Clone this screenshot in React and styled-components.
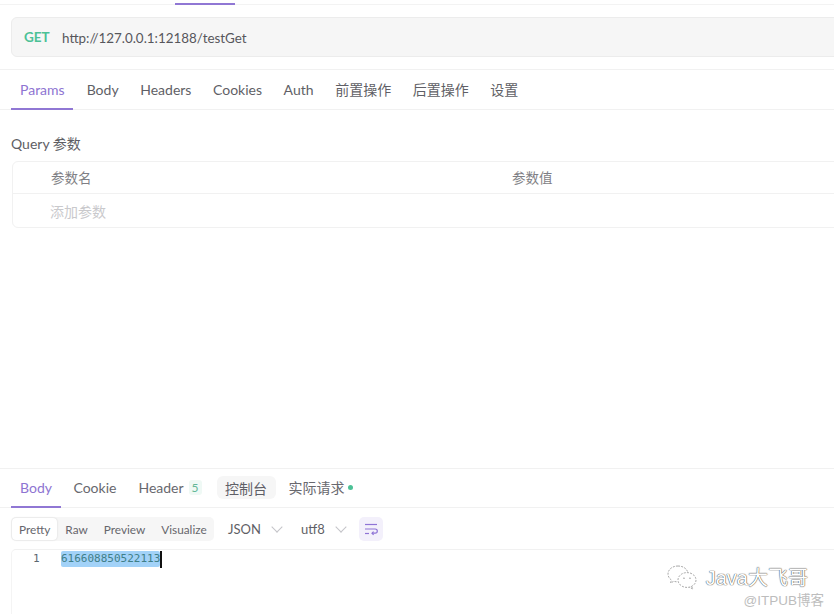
import React from 'react';
import styled, { createGlobalStyle } from 'styled-components';

const UI_FONT = '"Lato", "Noto Sans CJK SC", sans-serif';

const GlobalStyle = createGlobalStyle`
  html, body {
    margin: 0;
    padding: 0;
    background: #fff;
    overflow: hidden;
  }
  body {
    font-family: ${UI_FONT};
    color: #55555c;
  }
`;

const App = () => {
  return (
    <Page>
      <GlobalStyle />
      <TopStrip>
        <TopIndicator />
      </TopStrip>
      <UrlBar>
        <Method>GET</Method>
        <Url>http://127.0.0.1:12188/testGet</Url>
      </UrlBar>
      <RequestTabs>
        <Tab $active $gap={14}>Params</Tab>
        <Tab $gap={21.6}>Body</Tab>
        <Tab $gap={21.6}>Headers</Tab>
        <Tab $gap={21.6}>Cookies</Tab>
        <Tab $gap={21.6}>Auth</Tab>
        <Tab $gap={21.6}>前置操作</Tab>
        <Tab $gap={21.6}>后置操作</Tab>
        <Tab $gap={21.6}>设置</Tab>
      </RequestTabs>
      <RequestPanel>
        <SectionTitle>Query 参数</SectionTitle>
        <ParamTable>
          <ParamHead>
            <NameCell>参数名</NameCell>
            <ValueCell>参数值</ValueCell>
          </ParamHead>
          <ParamRow>
            <Placeholder>添加参数</Placeholder>
          </ParamRow>
        </ParamTable>
      </RequestPanel>
      <ResponseTabs>
        <ResTab $active $gap={12.5}>Body</ResTab>
        <ResTab $gap={22}>Cookie</ResTab>
        <ResTab $gap={15}>Header<Count>5</Count></ResTab>
        <ConsoleTab>控制台</ConsoleTab>
        <ResTab $gap={0}>实际请求<Dot /></ResTab>
      </ResponseTabs>
      <Toolbar>
        <ModeGroup>
          <ModeOn>Pretty</ModeOn>
          <Mode>Raw</Mode>
          <Mode>Preview</Mode>
          <Mode>Visualize</Mode>
        </ModeGroup>
        <Select $width={73}>
          JSON
          <Chevron />
        </Select>
        <Select $width={58}>
          utf8
          <Chevron />
        </Select>
        <WrapButton>
          <svg width="14" height="14" viewBox="0 0 14 14" fill="none" stroke="#8f74d6" strokeWidth="1.2">
            <path d="M1 2.5h12" />
            <path d="M1 7h10.2a1.9 1.9 0 0 1 0 4.2H8" />
            <path d="M9.6 9.6 8 11.2l1.6 1.6" />
            <path d="M1 11.5h4" />
          </svg>
        </WrapButton>
      </Toolbar>
      <CodeArea>
        <LineNo>1</LineNo>
        <Selected>616608850522113</Selected>
        <Caret />
      </CodeArea>
      <Watermark>
        <WechatRow>
          <svg width="32" height="26" viewBox="0 0 32 26" fill="none" stroke="#a9a9a9" strokeWidth="1" strokeDasharray="2 1.2">
            <path d="M12 2C6 2 2 5.700 2 10c0 2.500 1.300 4.500 3.400 6l-.8 3 3.200-1.700c1 .3 2 .5 3.200.5" />
            <path d="M12 2c4.800 0 8.700 2.500 9.700 6" />
            <ellipse cx="21" cy="16" rx="9" ry="7.400" />
            <path d="m25.500 22.500 1.500 2.500-3.700-1.600" />
            <circle cx="18" cy="14" r=".6" />
            <circle cx="24" cy="14" r=".6" />
          </svg>
          <WechatName>Java大飞哥</WechatName>
        </WechatRow>
        <Credit>@ITPUB博客</Credit>
      </Watermark>
    </Page>
  );
};

export default App;

const Page = styled.div`
  position: relative;
  width: 834px;
  height: 614px;
  overflow: hidden;
  background: #fff;
`;

const TopStrip = styled.div`
  position: relative;
  height: 4px;
  border-bottom: 1px solid #f3f3f3;
`;

const TopIndicator = styled.div`
  position: absolute;
  left: 175px;
  top: 3px;
  width: 60px;
  height: 2px;
  background: #9077d4;
`;

const UrlBar = styled.div`
  display: flex;
  align-items: center;
  height: 38px;
  margin: 12px -10px 0 11px;
  padding: 1px 0 0 12px;
  box-sizing: content-box;
  height: 37px;
  background: #f6f6f6;
  border: 1px solid #ececec;
  border-radius: 6px;
`;

const Method = styled.span`
  width: 38px;
  font-size: 13.500px;
  font-weight: 700;
  color: #4cc196;
  position: relative;
  top: -1px;
`;

const Url = styled.span`
  font-size: 13.400px;
  color: #56565c;
`;

const RequestTabs = styled.div`
  display: flex;
  height: 39px;
  margin-top: 12px;
  padding-left: 11px;
  border-top: 1px solid #f1f1f1;
  border-bottom: 1px solid #f1f1f1;
`;

const Tab = styled.div`
  display: flex;
  align-items: center;
  box-sizing: border-box;
  height: 40px;
  margin-right: ${(p) => p.$gap}px;
  padding: ${(p) => (p.$active ? '0 8px 0 9px' : '0')};
  font-size: 14px;
  color: ${(p) => (p.$active ? '#8e74d2' : '#5f5f66')};
  border-bottom: 2px solid ${(p) => (p.$active ? '#9077d4' : 'transparent')};
`;

const RequestPanel = styled.div`
  height: 358px;
  padding-left: 11px;
  box-sizing: border-box;
`;

const SectionTitle = styled.div`
  height: 20px;
  padding-top: 24px;
  font-size: 14px;
  line-height: 20px;
  color: #5e5e64;
`;

const ParamTable = styled.div`
  margin: 7px -10px 0 1px;
  border: 1px solid #f1f1f1;
  border-radius: 6px;
`;

const ParamHead = styled.div`
  display: flex;
  align-items: center;
  box-sizing: border-box;
  height: 32px;
  padding-bottom: 1px;
  border-bottom: 1px solid #f1f1f1;
  font-size: 13.500px;
  color: #7f7f85;
`;

const NameCell = styled.div`
  width: 499px;
  padding-left: 38px;
  box-sizing: border-box;
`;

const ValueCell = styled.div`
  flex: 1;
`;

const ParamRow = styled.div`
  display: flex;
  align-items: center;
  box-sizing: border-box;
  height: 33px;
  padding-left: 37px;
`;

const Placeholder = styled.span`
  font-size: 14px;
  color: #c9c9cc;
`;

const ResponseTabs = styled.div`
  display: flex;
  align-items: center;
  height: 38px;
  padding-left: 11px;
  border-top: 1px solid #f1f1f1;
  border-bottom: 1px solid #f1f1f1;
`;

const ResTab = styled.div`
  display: flex;
  align-items: center;
  box-sizing: border-box;
  height: 39px;
  margin-right: ${(p) => p.$gap}px;
  padding: ${(p) => (p.$active ? '0 9px' : '0')};
  font-size: 14px;
  color: ${(p) => (p.$active ? '#8e74d2' : '#68686e')};
  border-bottom: 2px solid ${(p) => (p.$active ? '#9077d4' : 'transparent')};
`;

const Count = styled.span`
  display: inline-block;
  margin-left: 5px;
  padding: 0 3px;
  font-size: 12px;
  color: #63b797;
  background: #eff9f5;
  border-radius: 3px;
`;

const ConsoleTab = styled.div`
  display: flex;
  align-items: center;
  height: 23px;
  margin: -1px 13px 0 0;
  padding: 0 8.500px;
  border-radius: 6px;
  background: #f6f6f6;
  font-size: 14px;
  color: #5f5f66;
`;

const Dot = styled.span`
  width: 5px;
  height: 5px;
  margin-left: 3px;
  border-radius: 50%;
  background: #4cc196;
`;

const Toolbar = styled.div`
  display: flex;
  align-items: center;
  box-sizing: border-box;
  height: 41px;
  padding: 1px 0 0 11px;
`;

const ModeGroup = styled.div`
  display: flex;
  align-items: center;
  width: 203px;
  height: 24px;
  margin-right: 14px;
  border-radius: 5px;
  background: #f6f6f6;
`;

const Mode = styled.div`
  padding: 0 8px;
  font-size: 11.800px;
  color: #66666c;
`;

const ModeOn = styled(Mode)`
  display: flex;
  align-items: center;
  height: 22px;
  margin-left: 1px;
  padding: 0 7px;
  background: #fff;
  border-radius: 4px;
  box-shadow: 0 0 2px rgba(0, 0, 0, 0.16);
`;

const Select = styled.div`
  display: flex;
  align-items: center;
  width: ${(p) => p.$width}px;
  height: 24px;
  font-size: 13px;
  color: #5f5f66;
`;

const Chevron = styled.span`
  width: 7px;
  height: 7px;
  margin: -4px 0 0 12px;
  border-right: 1px solid #c4c4c8;
  border-bottom: 1px solid #c4c4c8;
  transform: rotate(45deg);
`;

const WrapButton = styled.div`
  display: flex;
  align-items: center;
  justify-content: center;
  width: 24px;
  height: 24px;
  border-radius: 5px;
  background: #f3f0fb;
`;

const CodeArea = styled.div`
  display: flex;
  align-items: flex-start;
  height: 65px;
  padding-top: 1px;
  border-top: 1px solid #f1f1f1;
  margin-left: 11px;
  border-left: 1px solid #f4f4f4;
  border-top-left-radius: 5px;
  font-family: "DejaVu Sans Mono", monospace;
  font-size: 11px;
`;

const LineNo = styled.span`
  width: 49px;
  padding-left: 21px;
  box-sizing: border-box;
  line-height: 16px;
  color: #5b6770;
`;

const Selected = styled.span`
  height: 16px;
  line-height: 16px;
  background: #a2d2f8;
  color: #3f7f88;
  border-radius: 2px;
`;

const Caret = styled.span`
  width: 2px;
  height: 17px;
  background: #111;
`;

const Watermark = styled.div`
  position: absolute;
  right: 10px;
  bottom: 5px;
  display: flex;
  flex-direction: column;
  align-items: flex-end;
`;

const WechatRow = styled.div`
  display: flex;
  align-items: center;
  gap: 8px;
  margin: 0 16px -2px 0;
`;

const WechatName = styled.span`
  font-family: "Liberation Sans", "Noto Sans CJK SC", sans-serif;
  font-size: 20px;
  color: #fff;
  text-shadow: 0 0 1px #444, 0 0 1px #444;
`;

const Credit = styled.span`
  font-family: "Liberation Sans", "Noto Sans CJK SC", sans-serif;
  font-size: 13.500px;
  color: #bdbdbd;
`;
